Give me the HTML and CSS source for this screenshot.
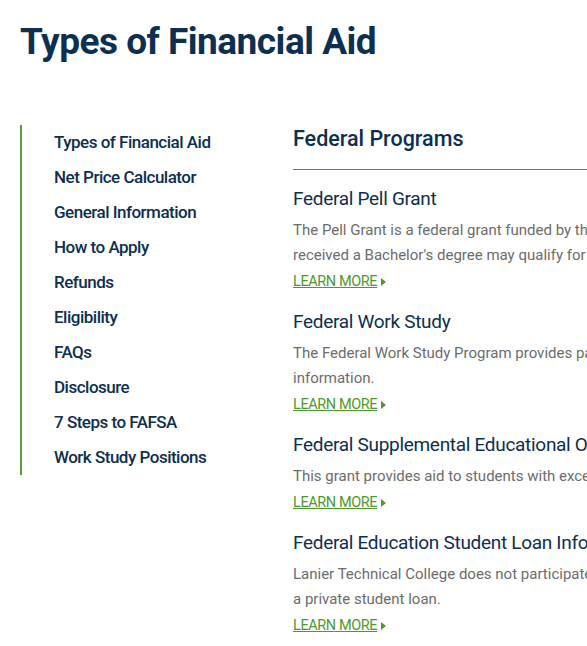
FILE: index.html
```html
<!DOCTYPE html>
<html lang="en">
<head>
<meta charset="utf-8">
<title>Types of Financial Aid</title>
<link rel="stylesheet" href="styles.css">
</head>
<body>
<h1 class="page-title">Types of Financial Aid</h1>
<div class="layout">
  <nav class="sidenav">
    <a href="#">Types of Financial Aid</a>
    <a href="#">Net Price Calculator</a>
    <a href="#">General Information</a>
    <a href="#">How to Apply</a>
    <a href="#">Refunds</a>
    <a href="#">Eligibility</a>
    <a href="#">FAQs</a>
    <a href="#">Disclosure</a>
    <a href="#">7 Steps to FAFSA</a>
    <a href="#">Work Study Positions</a>
  </nav>
  <main class="content">
    <h2 class="section-title">Federal Programs</h2>
    <section class="program">
      <h3>Federal Pell Grant</h3>
      <p>The Pell Grant is a federal grant funded by the U.S. Department of Education. Students who have not<br>received a Bachelor's degree may qualify for this grant.</p>
      <a class="more" href="#">LEARN MORE</a>
    </section>
    <section class="program">
      <h3>Federal Work Study</h3>
      <p>The Federal Work Study Program provides part-time employment to eligible students. Contact us for more<br>information.</p>
      <a class="more" href="#">LEARN MORE</a>
    </section>
    <section class="program">
      <h3>Federal Supplemental Educational Opportunity Grant</h3>
      <p>This grant provides aid to students with exceptional financial need.</p>
      <a class="more" href="#">LEARN MORE</a>
    </section>
    <section class="program">
      <h3>Federal Education Student Loan Information</h3>
      <p>Lanier Technical College does not participate in the Federal Direct Loan program. Students may apply for<br>a private student loan.</p>
      <a class="more" href="#">LEARN MORE</a>
    </section>
  </main>
</div>
</body>
</html>
```
FILE: styles.css
```css
html, body {
  margin: 0;
  padding: 0;
  overflow: hidden;
  background: #fff;
}
body {
  font-family: Roboto, "Open Sans", sans-serif;
  color: #0c2f52;
  width: 587px;
}
.page-title {
  margin: 0;
  padding: 18px 0 0 20px;
  font-size: 37px;
  line-height: 48px;
  font-weight: 700;
  color: #0c2f52;
  letter-spacing: -0.5px;
}
.layout {
  display: flex;
  align-items: flex-start;
  margin-top: 59px;
  padding-left: 20px;
}
.sidenav {
  box-sizing: border-box;
  flex: 0 0 273px;
  border-left: 2px solid #5a9b3c;
  display: flex;
  flex-direction: column;
}
.sidenav a {
  display: block;
  padding-left: 32px;
  height: 35px;
  line-height: 35px;
  font-size: 17px;
  font-weight: 500;
  letter-spacing: -0.5px;
  color: #0c2f52;
  text-decoration: none;
}
.content {
  flex: 0 0 700px;
}
.section-title {
  margin: 0;
  font-size: 21.5px;
  line-height: 28px;
  font-weight: 500;
  color: #0c2f52;
  padding: 0 0 16px;
  border-bottom: 1px solid #5a8a4a;
}
.program {
  margin-top: 15px;
}
.program + .program {
  margin-top: 14px;
}
.program h3 {
  margin: 0;
  font-size: 19px;
  line-height: 28px;
  font-weight: 400;
  letter-spacing: -0.3px;
  color: #0c2f52;
}
.program p {
  margin: 5px 0 0;
  font-size: 15px;
  line-height: 25px;
  color: #6c6c6c;
  white-space: nowrap;
}
.more {
  display: inline-flex;
  align-items: center;
  gap: 4px;
  margin-top: 1px;
  font-size: 14.5px;
  line-height: 25px;
  letter-spacing: -0.4px;
  color: #4b9a2b;
  text-decoration: underline;
  text-decoration-color: #4b9a2b;
}
.more::after {
  content: "";
  display: inline-block;
  border-left: 5px solid #4b9a2b;
  border-top: 4.5px solid transparent;
  border-bottom: 4.5px solid transparent;
}
```
